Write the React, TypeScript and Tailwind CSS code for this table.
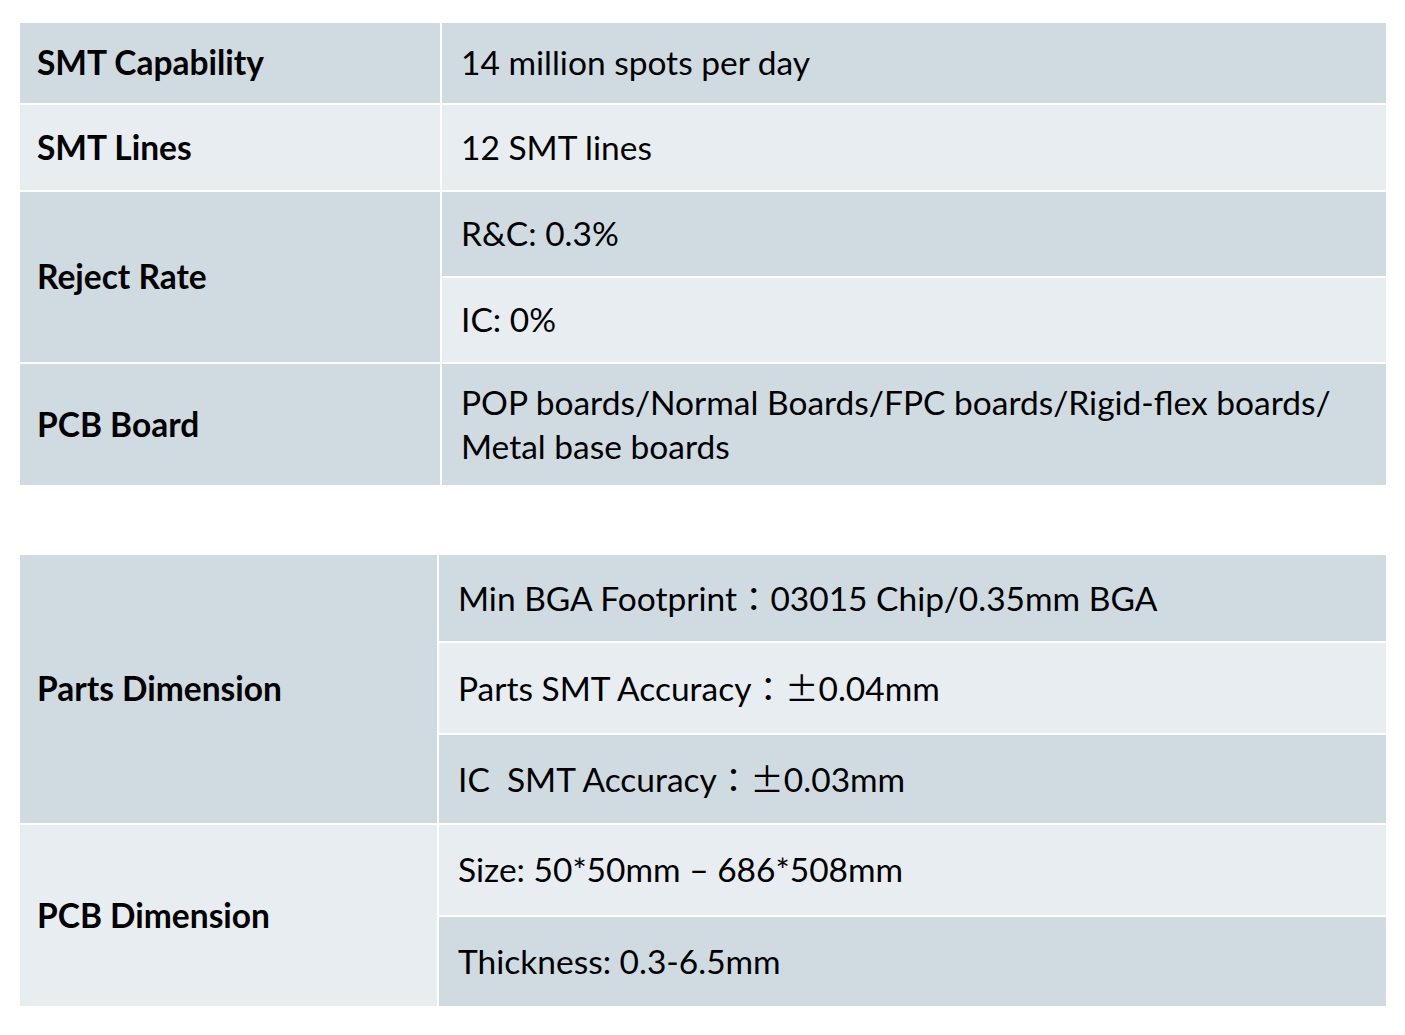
import React from 'react';

const DARK = 'bg-[#cfdbe1]';
const LIGHT = 'bg-[#e8edf1]';

function Cell({
  children,
  tone,
  bold,
  className = '',
}: {
  children: React.ReactNode;
  tone: 'dark' | 'light';
  bold?: boolean;
  className?: string;
}) {
  return (
    <div
      className={`flex items-center ${tone === 'dark' ? DARK : LIGHT} ${
        bold ? 'font-bold pl-[17px]' : 'pl-[19px]'
      } ${className}`}
    >
      <div className="leading-[44px] -mt-[2px]">{children}</div>
    </div>
  );
}

// full-width punctuation, centered like the original document
function Wide({ children }: { children: React.ReactNode }) {
  return <span className="font-['Noto_Sans_CJK_JP',sans-serif]">{children}</span>;
}

export default function App() {
  return (
    <div className="min-h-screen bg-white pt-[23px] pl-[20px] text-black font-['Lato','Noto_Sans_CJK_JP',sans-serif] text-[33.5px]">
      <div className="grid w-[1366px] grid-cols-[420px_944px] grid-rows-[80px_85px_84px_84px_121px] gap-[2px] bg-white">
        <Cell tone="dark" bold>SMT Capability</Cell>
        <Cell tone="dark">14 million spots per day</Cell>

        <Cell tone="light" bold>SMT Lines</Cell>
        <Cell tone="light">12 SMT lines</Cell>

        <Cell tone="dark" bold className="row-span-2">Reject Rate</Cell>
        <Cell tone="dark">R&amp;C: 0.3%</Cell>
        <Cell tone="light">IC: 0%</Cell>

        <Cell tone="dark" bold>PCB Board</Cell>
        <Cell tone="dark">
          POP boards/Normal Boards/FPC boards/Rigid-flex boards/
          <br />
          Metal base boards
        </Cell>
      </div>

      <div className="mt-[70px] grid w-[1366px] grid-cols-[417px_947px] grid-rows-[86px_90px_88px_90px_89px] gap-[2px] bg-white">
        <Cell tone="dark" bold className="row-span-3">Parts Dimension</Cell>
        <Cell tone="dark">
          Min BGA Footprint<Wide>：</Wide>03015 Chip/0.35mm BGA
        </Cell>
        <Cell tone="light">
          Parts SMT Accuracy<Wide>：±</Wide>0.04mm
        </Cell>
        <Cell tone="dark">
          <span className="whitespace-pre">IC  SMT Accuracy</span>
          <Wide>：±</Wide>0.03mm
        </Cell>

        <Cell tone="light" bold className="row-span-2">PCB Dimension</Cell>
        <Cell tone="light">Size: 50*50mm – 686*508mm</Cell>
        <Cell tone="dark">Thickness: 0.3-6.5mm</Cell>
      </div>
    </div>
  );
}
